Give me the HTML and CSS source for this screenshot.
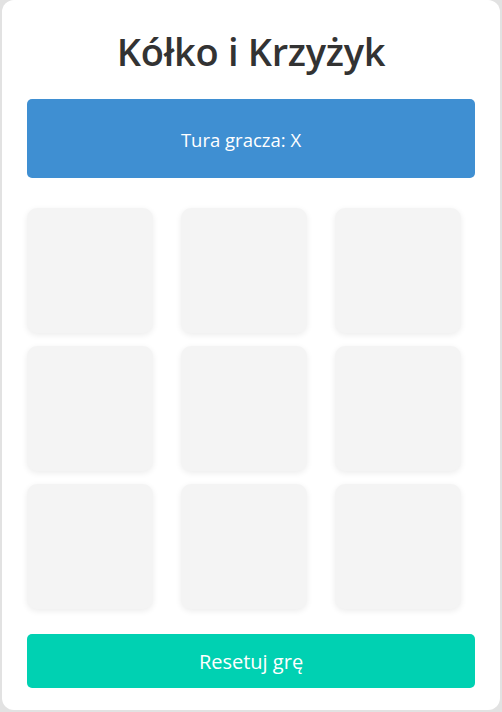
FILE: index.html
```html
<!DOCTYPE html>
<html lang="pl">
<head>
<meta charset="utf-8">
<title>Kółko i Krzyżyk</title>
<link rel="stylesheet" href="styles.css">
</head>
<body>
<main class="card">
  <h1 class="title">Kółko i Krzyżyk</h1>
  <div class="status"><span class="status-text">Tura gracza: X</span></div>
  <div class="board">
    <div class="cell"></div><div class="cell"></div><div class="cell"></div>
    <div class="cell"></div><div class="cell"></div><div class="cell"></div>
    <div class="cell"></div><div class="cell"></div><div class="cell"></div>
  </div>
  <button class="reset">Resetuj grę</button>
</main>
</body>
</html>
```
FILE: styles.css
```css
html, body {
  margin: 0;
  padding: 0;
}
body {
  background: #e2e2e2;
  font-family: "Open Sans", "Noto Sans", sans-serif;
  padding: 0 2px 2px 2px;
}
.card {
  background: #ffffff;
  border-radius: 12px;
  height: 710px;
  box-sizing: border-box;
  padding: 25px 25px 22px 25px;
  display: flex;
  flex-direction: column;
}
.title {
  margin: 0;
  height: 74px;
  line-height: 52px;
  text-align: center;
  font-size: 38px;
  font-weight: 600;
  letter-spacing: -0.3px;
  color: #333333;
}
.status {
  height: 80px;
  box-sizing: border-box;
  background: #3f8fd2;
  border-radius: 5px;
  color: #ffffff;
  font-size: 18.5px;
  display: flex;
  align-items: center;
  justify-content: center;
  padding: 3px 20px 0 0;
}
.board {
  margin-top: 30px;
  display: grid;
  grid-template-columns: repeat(3, 126px);
  grid-auto-rows: 125px;
  column-gap: 28px;
  row-gap: 13px;
}
.cell {
  background: #f4f4f4;
  border-radius: 10px;
  box-shadow: 0 2px 6px rgba(0, 0, 0, 0.08);
}
.reset {
  margin-top: 25px;
  height: 54px;
  border: none;
  border-radius: 5px;
  background: #00d1b2;
  color: #ffffff;
  font-family: inherit;
  font-size: 20px;
  padding: 0;
}
```
